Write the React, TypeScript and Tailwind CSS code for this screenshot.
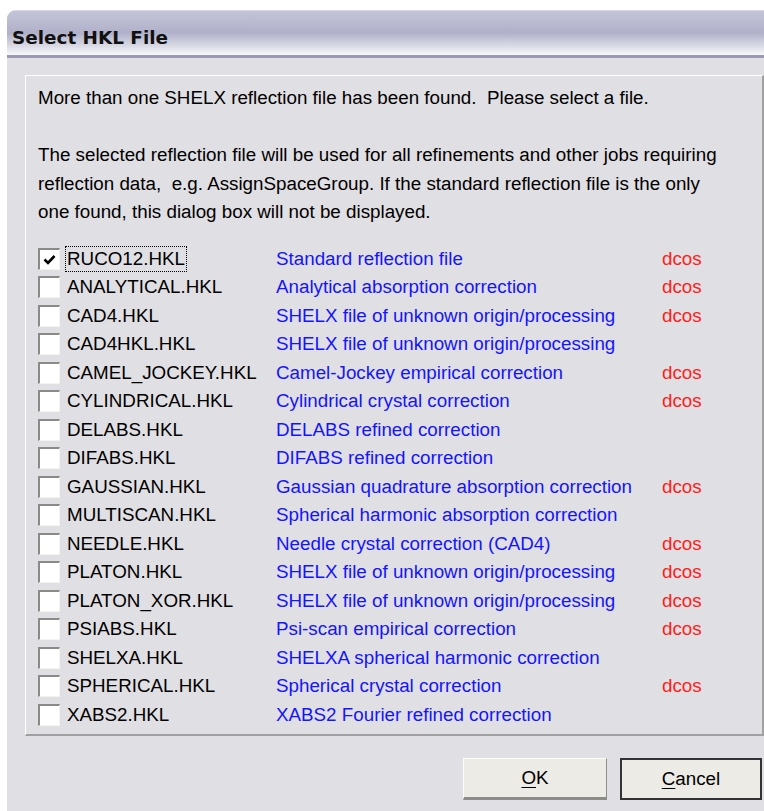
import React from "react";

type HklFile = { name: string; desc: string; dcos: boolean };

// Reflection files found in the job folder
const files: HklFile[] = [
  { name: "RUCO12.HKL", desc: "Standard reflection file", dcos: true },
  { name: "ANALYTICAL.HKL", desc: "Analytical absorption correction", dcos: true },
  { name: "CAD4.HKL", desc: "SHELX file of unknown origin/processing", dcos: true },
  { name: "CAD4HKL.HKL", desc: "SHELX file of unknown origin/processing", dcos: false },
  { name: "CAMEL_JOCKEY.HKL", desc: "Camel-Jockey empirical correction", dcos: true },
  { name: "CYLINDRICAL.HKL", desc: "Cylindrical crystal correction", dcos: true },
  { name: "DELABS.HKL", desc: "DELABS refined correction", dcos: false },
  { name: "DIFABS.HKL", desc: "DIFABS refined correction", dcos: false },
  { name: "GAUSSIAN.HKL", desc: "Gaussian quadrature absorption correction", dcos: true },
  { name: "MULTISCAN.HKL", desc: "Spherical harmonic absorption correction", dcos: false },
  { name: "NEEDLE.HKL", desc: "Needle crystal correction (CAD4)", dcos: true },
  { name: "PLATON.HKL", desc: "SHELX file of unknown origin/processing", dcos: true },
  { name: "PLATON_XOR.HKL", desc: "SHELX file of unknown origin/processing", dcos: true },
  { name: "PSIABS.HKL", desc: "Psi-scan empirical correction", dcos: true },
  { name: "SHELXA.HKL", desc: "SHELXA spherical harmonic correction", dcos: false },
  { name: "SPHERICAL.HKL", desc: "Spherical crystal correction", dcos: true },
  { name: "XABS2.HKL", desc: "XABS2 Fourier refined correction", dcos: false },
];

function CheckBox({ checked }: { checked: boolean }) {
  return (
    <div className="w-[22px] h-[22px] shrink-0 bg-white border-t-2 border-l-2 border-t-[#8a8a86] border-l-[#8a8a86] border-b border-r border-b-[#f4f3ee] border-r-[#f4f3ee] flex items-center justify-center">
      {checked && (
        <svg width="13" height="11" viewBox="0 0 13 11">
          <path d="M1.5 5.5 L5 9 L11.5 2" fill="none" stroke="#000" strokeWidth="2.6" />
        </svg>
      )}
    </div>
  );
}

export default function App() {
  const [selected, setSelected] = React.useState(0);

  return (
    <div className="w-[764px] h-[811px] bg-white pt-[10px] pl-[7px] overflow-hidden font-['Liberation_Sans',Arial,sans-serif] text-[18.8px] text-black">
      <div className="h-full rounded-tl-[9px] bg-[#e0dfe3] flex flex-col overflow-hidden">
        {/* title bar */}
        <div className="h-[48px] shrink-0 flex items-center pl-[5px] pt-[9px] bg-gradient-to-b from-[#c4c4d8] via-[#b0b1c9] to-[#f8f8fa] border-t border-t-[#d8d8e6] border-b-[3px] border-b-[#9a9ab2]">
          <span className="font-['DejaVu_Sans',sans-serif] font-bold text-[18.4px] text-[#111]">Select HKL File</span>
        </div>

        {/* group box */}
        <div className="mt-[17px] ml-[18px] h-[661px] border border-t-white border-l-white border-r-[#a0a0a0] border-b-[#a0a0a0] border-r-2 border-b-2 pl-[12px] pt-[8px] leading-[28.5px]">
          <p>More than one SHELX reflection file has been found.&nbsp; Please select a file.</p>
          <p className="mt-[28.5px]">
            The selected reflection file will be used for all refinements and other jobs requiring
            <br />
            reflection data,&nbsp; e.g. AssignSpaceGroup. If the standard reflection file is the only
            <br />
            one found, this dialog box will not be displayed.
          </p>

          <div className="mt-[18px] flex flex-col">
            {files.map((f, i) => (
              <div
                key={f.name}
                className="h-[28.5px] flex items-center cursor-default"
                onClick={() => setSelected(i)}
              >
                <CheckBox checked={i === 0} />
                <div className="ml-[6px] w-[210px] shrink-0">
                  <span
                    className={`inline-block leading-[24px] px-[1px] ${
                      i === selected ? "outline outline-1 outline-dotted outline-black" : ""
                    }`}
                  >
                    {f.name}
                  </span>
                </div>
                <span className="w-[386px] shrink-0 text-[#1414ff]">{f.desc}</span>
                <span className="text-[#ff2020]">{f.dcos ? "dcos" : ""}</span>
              </div>
            ))}
          </div>
        </div>

        {/* buttons */}
        <div className="mt-[22px] flex justify-end gap-[13px] pr-[2px]">
          <button className="w-[144px] h-[42px] bg-[#ecebe6] border border-t-[#fdfdf8] border-l-[#fdfdf8] border-r-[#8c8c88] border-b-[#8c8c88] border-b-[3px]">
            <span className="underline underline-offset-[3px]">O</span>K
          </button>
          <button className="w-[142px] h-[42px] bg-[#ecebe6] border-2 border-[#333]">
            <span className="underline underline-offset-[3px]">C</span>ancel
          </button>
        </div>
      </div>
    </div>
  );
}
